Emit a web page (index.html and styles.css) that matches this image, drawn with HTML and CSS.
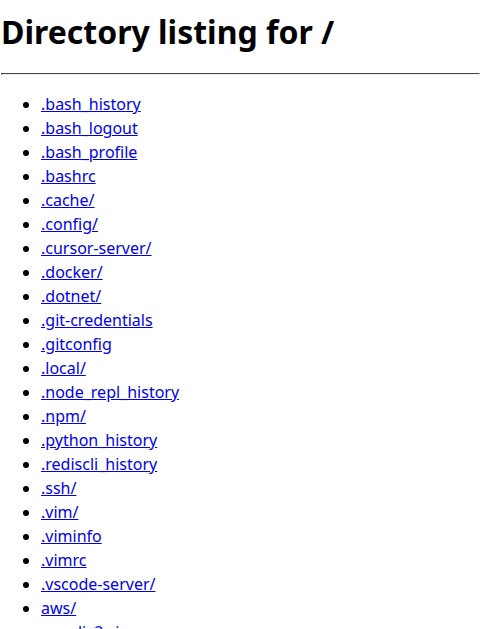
FILE: index.html
```html
<!DOCTYPE html>
<html>
<head>
<meta charset="utf-8">
<title>Directory listing for /</title>
<link rel="stylesheet" href="styles.css">
</head>
<body>
<h1 class="title">Directory listing for /</h1>
<hr class="rule">
<ul class="listing">
<li><a href=".bash_history">.bash_history</a></li>
<li><a href=".bash_logout">.bash_logout</a></li>
<li><a href=".bash_profile">.bash_profile</a></li>
<li><a href=".bashrc">.bashrc</a></li>
<li><a href=".cache/">.cache/</a></li>
<li><a href=".config/">.config/</a></li>
<li><a href=".cursor-server/">.cursor-server/</a></li>
<li><a href=".docker/">.docker/</a></li>
<li><a href=".dotnet/">.dotnet/</a></li>
<li><a href=".git-credentials">.git-credentials</a></li>
<li><a href=".gitconfig">.gitconfig</a></li>
<li><a href=".local/">.local/</a></li>
<li><a href=".node_repl_history">.node_repl_history</a></li>
<li><a href=".npm/">.npm/</a></li>
<li><a href=".python_history">.python_history</a></li>
<li><a href=".rediscli_history">.rediscli_history</a></li>
<li><a href=".ssh/">.ssh/</a></li>
<li><a href=".vim/">.vim/</a></li>
<li><a href=".viminfo">.viminfo</a></li>
<li><a href=".vimrc">.vimrc</a></li>
<li><a href=".vscode-server/">.vscode-server/</a></li>
<li><a href="aws/">aws/</a></li>
<li><a href="awscliv2.zip">awscliv2.zip</a></li>
</ul>
</body>
</html>
```
FILE: styles.css
```css
html, body {
  background: #ffffff;
}
body {
  margin: 0 0 0 1px;
  font-family: "Noto Sans", "DejaVu Sans", sans-serif;
  font-size: 16px;
  line-height: 24px;
  color: #000000;
}
.title {
  margin: 11px 0 0 0;
  font-size: 32px;
  line-height: 42px;
  font-weight: bold;
}
.rule {
  margin: 20px 0 0 0;
  border-style: inset;
  border-width: 1px;
  border-color: #9a9a9a #eeeeee #eeeeee #9a9a9a;
}
.listing {
  margin: 17px 0 0 0;
  padding-left: 40px;
  list-style: disc;
}
.listing a {
  color: #0000ee;
  text-decoration: underline;
}
```
